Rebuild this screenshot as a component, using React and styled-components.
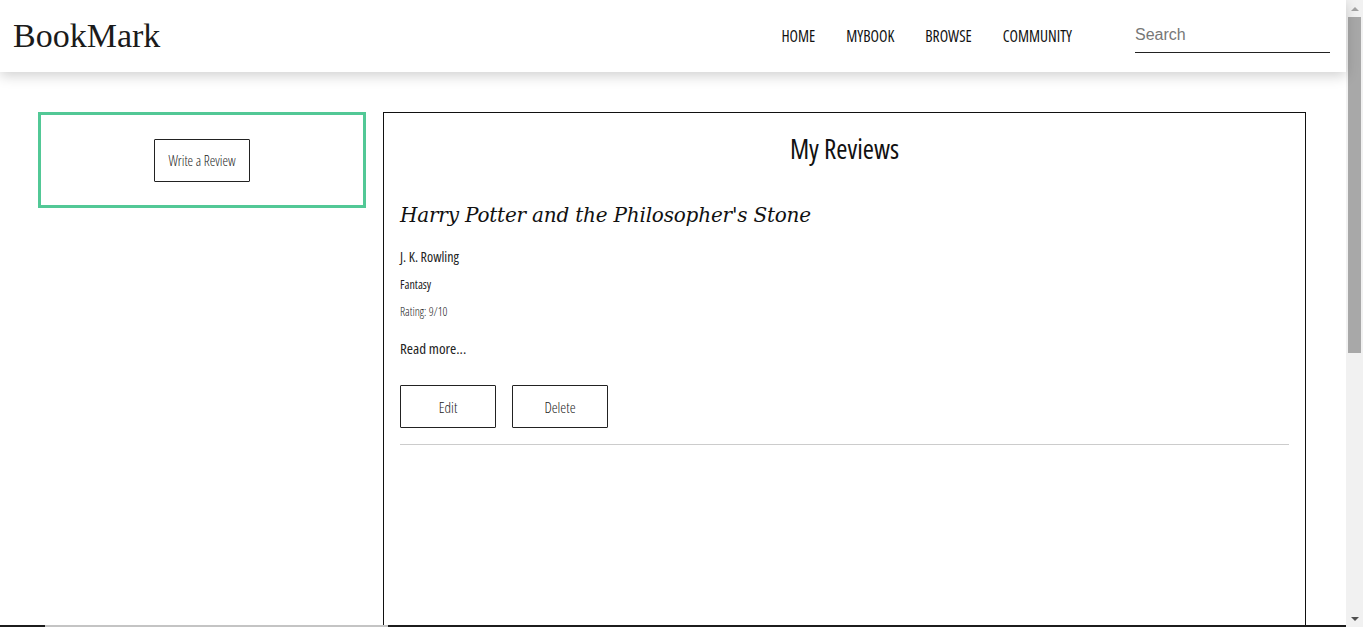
import React from 'react'
import styled, { createGlobalStyle } from 'styled-components'

const GlobalStyle = createGlobalStyle`
  body {
    margin: 0;
    font-family: "Open Sans", sans-serif;
    color: #222;
    background: #fff;
  }
`

const Page = styled.div`
  display: flex;
  width: 1363px;
  height: 627px;
  overflow: hidden;
`
const Content = styled.div`
  flex: 1;
  min-width: 0;
`
const ScrollTrack = styled.div`
  width: 17px;
  display: flex;
  flex-direction: column;
  background: #f1f1f1;
`
const ScrollArrow = styled.div`
  height: 17px;
  display: flex;
  align-items: center;
  justify-content: center;
  &::before {
    content: '';
    border-left: 4px solid transparent;
    border-right: 4px solid transparent;
    ${props => props.down
      ? 'border-top: 4px solid #505050;'
      : 'border-bottom: 4px solid #a3a3a3;'}
  }
`
const ScrollThumb = styled.div`
  height: 336px;
  margin: 0 2px;
  background: #a8a8a8;
`
const ScrollSpace = styled.div`
  flex: 1;
`
const Header = styled.header`
  position: relative;
  z-index: 2;
  height: 72px;
  display: flex;
  align-items: center;
  justify-content: space-between;
  padding: 0 16px 0 13px;
  background: #fff;
  box-shadow: 0 4px 12px rgba(0, 0, 0, 0.18);
`
const Logo = styled.h1`
  margin: 0;
  font-family: "Liberation Serif", serif;
  font-weight: 400;
  font-size: 34px;
  color: #1b1b1b;
`
const Nav = styled.nav`
  display: flex;
  align-items: center;
`
const NavLink = styled.a`
  margin-left: 31px;
  font-size: 15.5px;
  font-stretch: 75%;
  color: #111;
  text-decoration: none;
  text-transform: uppercase;
`
const SearchInput = styled.input`
  margin: 6px 0 0 63px;
  width: 195px;
  padding: 0 0 8px;
  border: none;
  border-bottom: 1px solid #222;
  font-family: "Liberation Sans", Arial, sans-serif;
  font-size: 16px;
  outline: none;
  &::placeholder {
    color: #777;
  }
`
const Main = styled.main`
  display: flex;
  align-items: flex-start;
  gap: 17px;
  height: 513px;
  padding: 40px 0 0 38px;
  overflow: hidden;
`
const Sidebar = styled.aside`
  width: 322px;
  height: 90px;
  display: flex;
  align-items: center;
  justify-content: center;
  border: 3px solid #52c896;
`
const OutlineButton = styled.button`
  width: ${props => props.width || 96}px;
  height: 43px;
  background: #fff;
  border: 1px solid #222;
  border-radius: 1px;
  font-family: "Open Sans", sans-serif;
  font-weight: 300;
  font-size: ${props => props.size || 15}px;
  font-stretch: 75%;
  color: #222;
  cursor: pointer;
`
const Panel = styled.section`
  width: 889px;
  min-height: 560px;
  padding: 17px 16px 20px;
  border: 1px solid #111;
`
const PanelTitle = styled.h2`
  margin: 0 0 36px;
  text-align: center;
  font-weight: 400;
  font-size: 27px;
  font-stretch: 75%;
  color: #111;
`
const BookTitle = styled.h3`
  margin: 0 0 20px;
  font-family: "DejaVu Serif", "Liberation Serif", serif;
  font-style: italic;
  font-weight: 400;
  font-size: 20px;
  letter-spacing: -0.2px;
  color: #111;
`
const Line = styled.p`
  margin: 0 0 ${props => props.gap || 10}px;
  font-size: ${props => props.size}px;
  font-weight: ${props => props.weight || 400};
  font-stretch: 75%;
  color: #222;
`
const Actions = styled.div`
  display: flex;
  gap: 16px;
  padding-bottom: 16px;
  border-bottom: 1px solid #ccc;
`
const Footer = styled.footer`
  display: flex;
  height: 482px;
  padding-left: 45px;
  background: #1c1c1c;
`
const FooterTab = styled.div`
  width: 343px;
  height: 2px;
  background: #c4c4c4;
`

const App = () => {
  return (
    <Page>
      <GlobalStyle />
      <Content>
        <Header>
          <Logo>BookMark</Logo>
          <Nav>
            <NavLink href="#">Home</NavLink>
            <NavLink href="#">MyBook</NavLink>
            <NavLink href="#">Browse</NavLink>
            <NavLink href="#">Community</NavLink>
            <SearchInput placeholder="Search" />
          </Nav>
        </Header>
        <Main>
          <Sidebar>
            <OutlineButton size={14}>Write a Review</OutlineButton>
          </Sidebar>
          <Panel>
            <PanelTitle>My Reviews</PanelTitle>
            <BookTitle>Harry Potter and the Philosopher's Stone</BookTitle>
            <Line size={14} weight={500} gap={10}>J. K. Rowling</Line>
            <Line size={12} gap={10}>Fantasy</Line>
            <Line size={12} weight={300} gap={18}>Rating: 9/10</Line>
            <Line size={15} gap={27}>Read more...</Line>
            <Actions>
              <OutlineButton>Edit</OutlineButton>
              <OutlineButton>Delete</OutlineButton>
            </Actions>
          </Panel>
        </Main>
        <Footer>
          <FooterTab />
        </Footer>
      </Content>
      <ScrollTrack>
        <ScrollArrow />
        <ScrollThumb />
        <ScrollSpace />
        <ScrollArrow down />
      </ScrollTrack>
    </Page>
  )
}

export default App
